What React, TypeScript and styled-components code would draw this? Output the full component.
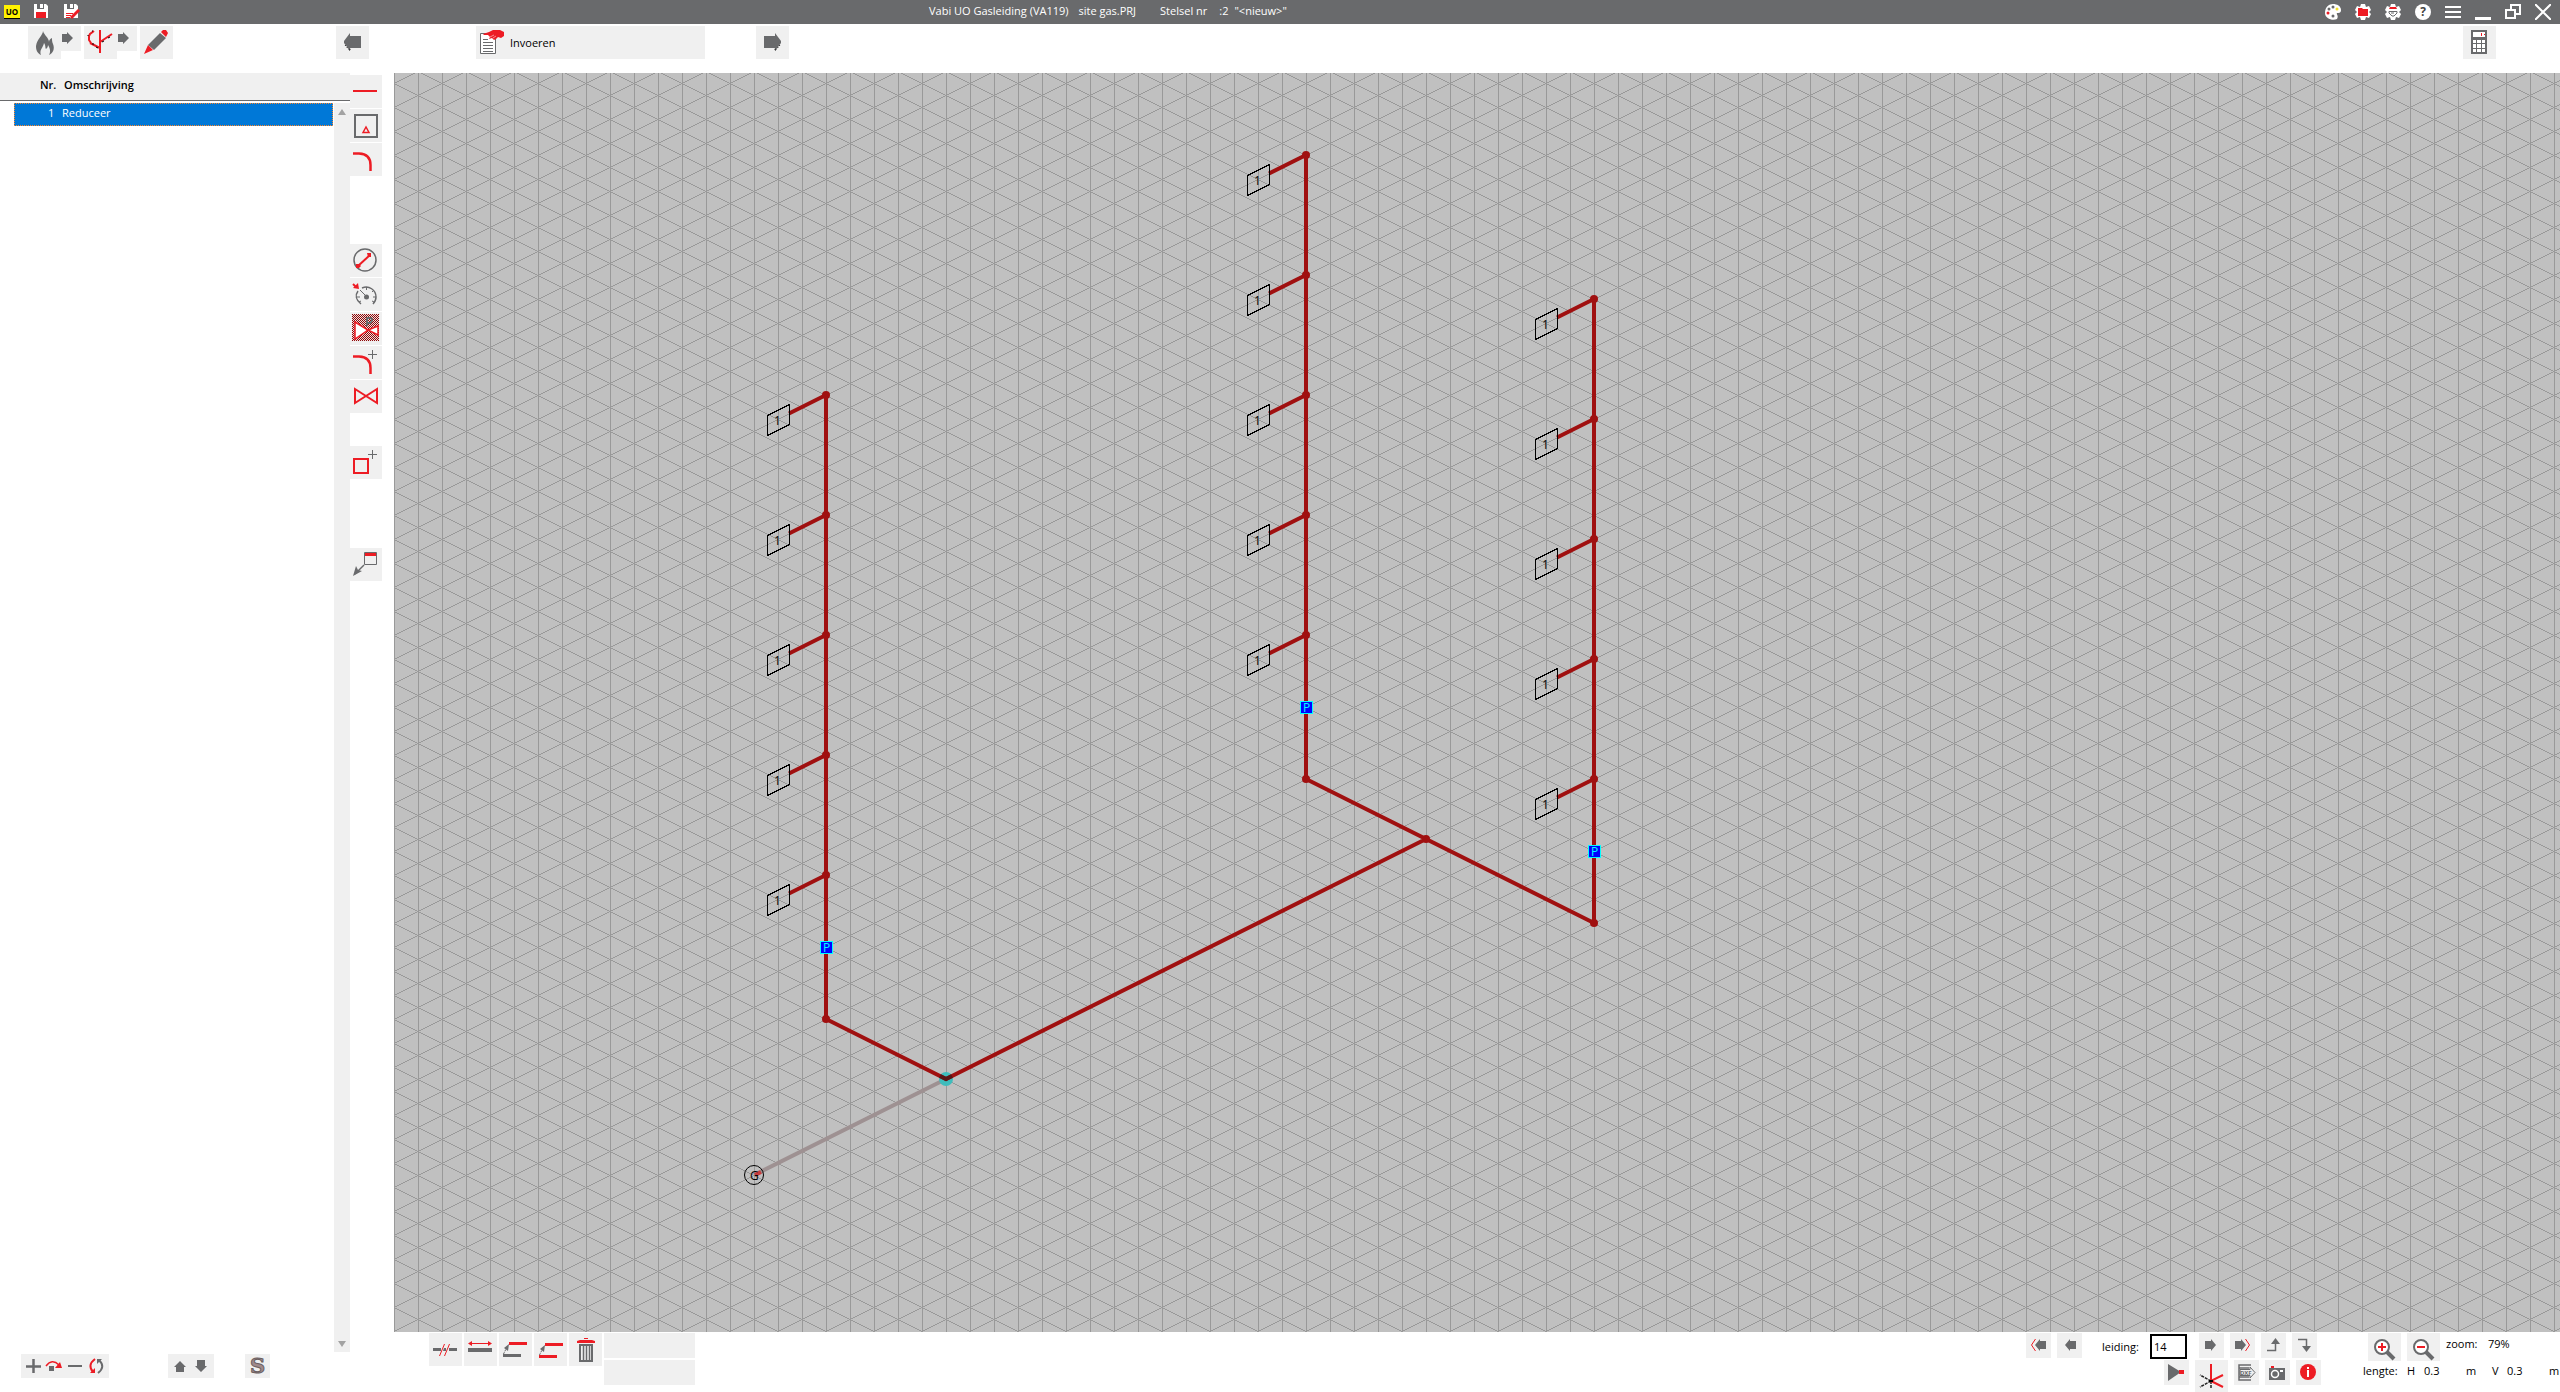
import React from "react";
import styled, { createGlobalStyle } from "styled-components";

const RED = "#ed1c24";
const GREY = "#696a6c";
const FACE = "#f0f0f0";
const PIPE = "#a01010";

const GlobalStyle = createGlobalStyle`
  *, *::before, *::after { box-sizing: border-box; }
  body { margin: 0; background: #fff; overflow: hidden; }
  body, button, input, table { font: 11px/16px "Open Sans", "Noto Sans", sans-serif; color: #000; }
  svg { display: block; }
`;

/* ---------- layout ---------- */

const Window = styled.div`
  display: flex;
  flex-direction: column;
  height: 100vh;
`;

const TitleBar = styled.header`
  display: grid;
  grid-template-columns: calc(50% - 351px) 1fr auto;
  align-items: center;
  height: 24px;
  background: ${GREY};
`;

const TitleGroup = styled.div<{ $gap: number }>`
  display: flex;
  align-items: center;
  gap: ${(p) => p.$gap}px;
  padding: 0 9px 0 4px;
`;

const Title = styled.h1`
  display: flex;
  margin: 0;
  font-size: 11px;
  line-height: 22px;
  font-weight: 400;
  height: 24px;
  color: #fff;
  white-space: pre;
`;

const TitlePart = styled.span<{ $after: number }>`
  margin-right: ${(p) => p.$after}px;
`;

const FlatButton = styled.button<{ $w?: number; $h?: number }>`
  display: block;
  flex: none;
  width: ${(p) => p.$w ?? 33}px;
  height: ${(p) => p.$h ?? 33}px;
  padding: 0;
  border: 0;
  background: ${FACE};
  overflow: hidden;
`;

const TitleButton = styled(FlatButton)`
  width: 16px;
  height: 16px;
  background: none;
  overflow: visible;
`;

const Toolbar = styled.nav`
  display: flex;
  align-items: flex-start;
  height: 49px;
  padding: 2px 64px 0 28px;
`;

const Steps = styled.div`
  display: flex;
  align-items: flex-start;
  gap: 3px;
  margin-right: 163px;
`;

const Step = styled.div`
  display: flex;
  align-items: flex-start;
`;

const ModeButton = styled.button`
  display: flex;
  align-items: center;
  gap: 1px;
  width: 229px;
  height: 33px;
  margin: 0 51px 0 107px;
  padding: 0;
  border: 0;
  background: ${FACE};
`;

const Push = styled.div`
  margin-left: auto;
`;

const Body = styled.div`
  display: flex;
  flex: 1;
  min-height: 0;
`;

const SidePanel = styled.aside`
  display: flex;
  flex-direction: column;
  width: 350px;
  padding-bottom: 14px;
`;

const ListArea = styled.div`
  display: grid;
  grid-template-columns: 1fr 16px;
  flex: 1;
`;

const PartTable = styled.table`
  grid-column: 1 / 3;
  grid-row: 1;
  display: block;
`;

const PartHead = styled.thead`
  display: block;
  height: 28px;
  background: ${FACE};
  border-bottom: 1px solid ${GREY};
`;

const PartBody = styled.tbody`
  display: block;
  padding: 2px 17px 0 14px;
`;

const HeadRow = styled.tr`
  display: flex;
  padding: 4px 0 0 40px;
`;

const HeadCell = styled.th<{ $w: number }>`
  width: ${(p) => p.$w}px;
  padding: 0;
  font-weight: 600;
  text-align: left;
`;

const PartRow = styled.tr`
  display: flex;
  height: 23px;
  padding: 1px 0 0 33px;
  background: #0078d7;
  border: 1px dotted #ff8728;
`;

const PartCell = styled.td<{ $w: number }>`
  width: ${(p) => p.$w}px;
  padding: 0;
  color: #fff;
`;

const ScrollTrack = styled.div`
  grid-column: 2;
  grid-row: 1;
  display: flex;
  flex-direction: column;
  justify-content: space-between;
  align-items: center;
  margin-top: 30px;
  padding: 6px 0 5px;
  background: ${FACE};
`;

const ListTools = styled.div`
  display: flex;
  padding: 2px 0 0 21px;
`;

const ListToolGroup = styled.div<{ $after: number }>`
  display: flex;
  margin-right: ${(p) => p.$after}px;
`;

const Rail = styled.nav`
  display: flex;
  flex-direction: column;
  width: 44px;
  padding-top: 2px;
`;

const RailGroup = styled.div<{ $after: number }>`
  display: flex;
  flex-direction: column;
  gap: 1px;
  margin-bottom: ${(p) => p.$after}px;
`;

const Work = styled.main`
  display: flex;
  flex-direction: column;
  flex: 1;
  min-width: 0;
`;

const Canvas = styled.svg`
  flex: 1;
  width: 100%;
  min-height: 0;
  background: #c0c0c0;
`;

const Footer = styled.footer`
  display: flex;
  align-items: flex-start;
  height: 60px;
  padding: 1px 0 0 35px;
`;

const FooterTools = styled.div`
  display: flex;
  gap: 2px;
  margin-right: auto;
`;

const InfoFields = styled.div`
  display: grid;
  gap: 2px;
`;

const InfoField = styled.div`
  width: 91px;
  height: 25px;
  background: ${FACE};
`;

const Block = styled.div<{ $after?: number }>`
  display: flex;
  flex-direction: column;
  gap: 2px;
  margin-right: ${(p) => p.$after ?? 0}px;
`;

const BlockRow = styled.div<{ $indent?: number; $gap?: number }>`
  display: flex;
  align-items: flex-start;
  gap: ${(p) => p.$gap ?? 6}px;
  height: 25px;
  padding-left: ${(p) => p.$indent ?? 0}px;
`;

const PipeLabel = styled.label`
  width: 56px;
  padding: 6px 0 0 14px;
  white-space: nowrap;
`;

const PipeInput = styled.input`
  width: 37px;
  height: 25px;
  margin: 1px 6px 0 0;
  padding: 0 0 0 2px;
  border: 2px solid #000;
  border-radius: 0;
  background: #fff;
  outline: 0;
`;

const Caption = styled.span<{ $w: number }>`
  flex: none;
  width: ${(p) => p.$w}px;
  padding-top: 3px;
  white-space: nowrap;
`;

const CanvasText = styled.text`
  font: 12px "Open Sans", "Noto Sans", sans-serif;
`;

/* ---------- icons ---------- */

const Icon = ({ w = 33, h = w, children }: { w?: number; h?: number; children: React.ReactNode }) => (
  <svg width={w} height={h} viewBox={`0 0 ${w} ${h}`} fill="none" aria-hidden="true">{children}</svg>
);

const FlameIcon = () => (
  <Icon>
    <path fill={GREY} d="M15 5C15 9 9 13 8 20C8 24 9 27 13 29C11 24 15 22 16 17C18 20 17 22 18 23C19 22 20 21 20 19C22 22 23 26 21 29C25 27 27 23 25 18C24 16 24 14 24 12C22 13 21 14 21 16C21 12 16 9 15 5Z" />
  </Icon>
);
const StepArrow = () => (
  <Icon w={20} h={25}><path fill={GREY} d="M1 8H6V6L12 12L6 18V16H1Z" /></Icon>
);
const TreeIcon = () => (
  <Icon>
    <path stroke={RED} strokeWidth="2" d="M16 4V27M16 16L28 8M16 22L6 17M10 5L6 8L5 10V14L7 17" />
    <path stroke="#000" d="M18 16L20 15M24 12L26 11M8 18L10 18M12 21L14 22M4 9V10M8 5H9" />
  </Icon>
);
const PencilIcon = () => (
  <Icon>
    <path fill={GREY} d="M8 19L20 7L26 12L14 24Z" />
    <path fill={RED} d="M21 6L23 4H26L28 7L26 11ZM8 19L13 24L4 28Z" />
  </Icon>
);
const BigArrow = ({ flip = false }: { flip?: boolean }) => (
  <Icon>
    <g transform={flip ? "translate(33 0) scale(-1 1)" : undefined}>
      <path fill={GREY} d="M8 15L14 7V10H25V22H14V25L8 17Z" />
      <path stroke="#000" strokeDasharray="1 2" d="M9 19L14 25V22" />
    </g>
  </Icon>
);
const EnterIcon = () => (
  <Icon>
    <path fill="#fff" stroke={GREY} d="M4.500 7.500H19.500V27.500H4.500Z" />
    <path stroke={GREY} d="M7 13.500H12M7 16.500H17M7 19.500H17M7 22.500H17M7 25.500H17" />
    <path fill={RED} d="M7 8L13 6L17 4H24L28 6V10L25 12L22 11L20 13L18 14L16 12L13 13L14 11L12 9H8Z" />
    <path stroke="#fff" strokeWidth="0.500" d="M14 11L18 9M17 12L20 10" />
  </Icon>
);
const CalculatorIcon = () => (
  <Icon>
    <path fill={GREY} d="M8 4H24V28H8Z" />
    <path fill="#fff" d="M10 6H22V11H10ZM10 14H13V17H10ZM14 14H18V17H14ZM19 14H22V17H19ZM10 18H13V22H10ZM14 18H18V22H14ZM19 18H22V22H19ZM10 23H13V26H10ZM14 23H18V26H14ZM19 23H22V26H19Z" />
    <path stroke={RED} d="M18.500 7V10M21 8.500H22" />
  </Icon>
);

const LineIcon = () => <Icon><path fill={RED} d="M3 15H27V17H3Z" /></Icon>;
const ApplianceIcon = () => (
  <Icon>
    <path stroke={GREY} strokeWidth="2" d="M5 6H27V28H5Z" />
    <path stroke={RED} strokeWidth="1.500" d="M13 23.500L16 18L19 23.500Z" />
  </Icon>
);
const Plus = () => <path stroke={GREY} d="M22.500 4V13M18 8.500H27" />;
const BendIcon = ({ plus = false }: { plus?: boolean }) => (
  <Icon>
    <path stroke={RED} strokeWidth="2.500" d="M3 10.500H9Q20.500 11 20.500 22V28" />
    {plus && <Plus />}
  </Icon>
);
const DiameterIcon = () => (
  <Icon>
    <circle cx="15" cy="16" r="11" stroke={GREY} strokeWidth="1.500" />
    <path stroke={RED} strokeWidth="2" d="M8 22L20 11" />
    <path fill={RED} d="M17 9H21V13H18ZM6 20H9L11 22L9 24H6Z" />
  </Icon>
);
const GaugeIcon = () => (
  <Icon>
    <path stroke={GREY} strokeWidth="1.500" d="M11 26C6 22 5 17 8 13M12 10C19 7 26 12 26 19C26 22 25 24 23 26" />
    <path stroke={GREY} d="M16.500 9V12M22 14L24 12M23 19H26M7 19H10M9 24L11 23M22 23L24 24M10 12L16 18" />
    <circle cx="16.500" cy="19" r="2.500" fill={GREY} />
    <path stroke={RED} strokeWidth="2" d="M3 6L6 9" />
    <path fill={RED} d="M8 5L9 11L3 10Z" />
  </Icon>
);
const RegulatorIcon = () => (
  <Icon>
    <defs>
      <pattern id="mesh" width="2" height="2" patternUnits="userSpaceOnUse">
        <path fill="#f0dede" d="M0 0H2V2H0Z" />
        <path fill="#8c0808" d="M0 0H1V1H0ZM1 1H2V2H1Z" />
      </pattern>
    </defs>
    <path fill="url(#mesh)" shapeRendering="crispEdges" d="M2 2H29V29H2Z" />
    <path stroke={GREY} strokeWidth="2" d="M17 14V6H20Q22 6 22 8T20 11H17" />
    <path fill="#fff" stroke={RED} strokeWidth="1.500" d="M5 10L18 18L5 27Z" />
    <path fill="#fff" stroke={RED} strokeWidth="1.500" d="M28 14L18 18L28 23Z" />
  </Icon>
);
const ValveIcon = () => (
  <Icon><path stroke={RED} strokeWidth="2" d="M5 9L27 23V9L5 23Z" /></Icon>
);
const SquarePlusIcon = () => (
  <Icon><path stroke={RED} strokeWidth="2" d="M4 13H18V27H4Z" /><Plus /></Icon>
);
const CalloutIcon = () => (
  <Icon>
    <path stroke={GREY} d="M14.500 4.500H26.500V16.500H14.500Z" />
    <path fill={RED} d="M15 5H26V8H15Z" />
    <path stroke={GREY} strokeWidth="1.500" d="M14 17L5 26" />
    <path fill={GREY} d="M3 28L6 18L8 22L12 23Z" />
  </Icon>
);

const CutIcon = () => (
  <Icon>
    <path fill={GREY} d="M4 15H12V18H4ZM20 15H28V18H20ZM15 15H17V18H14Z" />
    <path stroke={RED} d="M10.500 23L15.500 11M15.500 23L20.500 11" />
  </Icon>
);
const StretchIcon = () => (
  <Icon>
    <path fill={GREY} d="M4 15H28V19H4Z" />
    <path stroke={RED} d="M5 10.500H27" />
    <path fill={RED} d="M4 10.500L8 8V13ZM28 10.500L24 8V13Z" />
  </Icon>
);
const MoveIcon = ({ both = false }: { both?: boolean }) => (
  <Icon>
    <g transform={both ? "translate(1 1)" : undefined}>
      <path fill={RED} d="M10 9H28V12H10Z" />
      <path fill={both ? RED : GREY} d="M4 21H22V24H4Z" />
      <path stroke={GREY} d="M4.500 21L8.500 13" strokeDasharray="2 1" />
      <path fill={GREY} d="M10 11L5 15L9 18Z" />
    </g>
  </Icon>
);
const TrashIcon = () => (
  <Icon>
    <path stroke={GREY} strokeWidth="2" d="M11 12H23V28H11Z" />
    <path stroke={GREY} strokeWidth="1.500" d="M14.500 13V27M17.500 13V27M20.500 13V27" />
    <path fill={RED} d="M8 8L11 7H23L26 8V10H8ZM15 5H19V6H15Z" />
  </Icon>
);

const SmallArrow = ({ back = false, far = false }: { back?: boolean; far?: boolean }) => (
  <Icon w={25}>
    <g transform={back ? "translate(25 0) scale(-1 1)" : undefined}>
      <path fill={GREY} d={far ? "M5 8H11V6L16 12L11 18V16H5Z" : "M6 8H12V6L17 12L12 18V16H6Z"} />
      {far && <path stroke={RED} d="M15.500 6L19.500 12L15.500 18" />}
    </g>
  </Icon>
);
const TurnIcon = ({ down = false }: { down?: boolean }) => (
  <Icon w={25}>
    {down ? (
      <><path stroke={GREY} d="M6 6.500H14.500V15" strokeWidth="1.500" /><path fill={GREY} d="M10 13H19L14.500 19Z" /></>
    ) : (
      <><path stroke={GREY} d="M6 17.500H14.500V10" strokeWidth="1.500" /><path fill={GREY} d="M10 11H19L14.500 5Z" /></>
    )}
  </Icon>
);
const PlayIcon = () => (
  <Icon w={25}><path fill={GREY} d="M4 4L17 12L4 21Z" /><path fill={RED} d="M15 10H20V14H15Z" /></Icon>
);
const AxesIcon = () => (
  <Icon>
    <path stroke="#222" strokeWidth="1.500" strokeDasharray="3 1" d="M16 21L5 15M16 21L5 27M16 21V29" />
    <path stroke={RED} strokeWidth="2" d="M16 4V21L28 15M16 21L28 27" />
    <path stroke="#000" strokeWidth="2" d="M14 21H18" />
  </Icon>
);
const DxfText = styled.text`
  font: 700 6px "Noto Sans", sans-serif;
`;
const DxfIcon = () => (
  <Icon w={25}>
    <path stroke={GREY} strokeWidth="1.500" d="M17 5H5V20H17M5 8H15M5 17H15" />
    <path fill={FACE} stroke={GREY} d="M6 9.500H16V7L21 12.500L16 18V15.500H6Z" />
    <DxfText x="6" y="15" fill={GREY}>DXF</DxfText>
  </Icon>
);
const CameraIcon = () => (
  <Icon w={25}>
    <path fill={GREY} d="M4 8H20V20H4Z" />
    <path fill={RED} d="M6 6H9V8H6Z" />
    <circle cx="10" cy="14" r="3.500" fill={GREY} stroke="#fff" strokeWidth="1.500" />
    <path fill="#fff" d="M15 10H18V12H15Z" />
  </Icon>
);
const InfoIcon = () => (
  <Icon w={25}>
    <circle cx="12" cy="12" r="8" fill={RED} />
    <path fill="#fff" d="M11 7H13V9H11ZM11 10H13V17H11Z" />
  </Icon>
);
const ZoomIcon = ({ plus = false }: { plus?: boolean }) => (
  <Icon w={33} h={28}>
    <circle cx="14" cy="14" r="7" fill="#fff" stroke={GREY} strokeWidth="2" />
    <path stroke={GREY} strokeWidth="4" d="M19 19L26 26" />
    <path stroke={RED} strokeWidth="2" d={plus ? "M10 14H18M14 10V18" : "M10 14H18"} />
  </Icon>
);

const AddIcon = () => <Icon w={22} h={24}><path stroke={GREY} strokeWidth="2.500" d="M5 12.500H20M12.500 5V19" /></Icon>;
const JumpIcon = () => (
  <Icon w={22} h={24}>
    <path fill={GREY} d="M6 12H11V17H6Z" />
    <path stroke={RED} strokeWidth="1.500" d="M3 12Q9 4 16 11" />
    <path fill={RED} d="M17 8L19 14H12Z" />
  </Icon>
);
const RemoveIcon = () => <Icon w={22} h={24}><path fill={GREY} d="M3 11H17V13H3Z" /></Icon>;
const SwapIcon = () => (
  <Icon w={22} h={24}>
    <path stroke={RED} strokeWidth="2" d="M8 5Q0 11 6 18" />
    <path fill={RED} d="M3 19H8V14Z" />
    <path stroke={GREY} strokeWidth="2" d="M11 19Q19 13 12 6" />
    <path fill={GREY} d="M10 5H15L10 10Z" />
  </Icon>
);
const UpIcon = () => <Icon w={23} h={24}><path fill={GREY} d="M12 7L18 13H16V18H8V13H6Z" /></Icon>;
const DownIcon = () => <Icon w={23} h={24}><path fill={GREY} d="M10 18L16 12H14V6H6V12H4Z" /></Icon>;
const StandardMark = styled.span`
  display: block;
  font: 700 21px/24px "DejaVu Serif", serif;
  color: #a08a8a;
  -webkit-text-stroke: 1px #6a5f60;
  text-align: center;
`;

const AppBadge = styled.span`
  width: 16px;
  height: 14px;
  background: #fff200;
  border-bottom: 1px solid #000;
  font: 700 8px/13px "Open Sans", sans-serif;
  text-align: center;
`;
const SaveIcon = ({ edit = false }: { edit?: boolean }) => (
  <Icon w={16}>
    <path fill="#fff" d="M0 0H3V5H10V0H12L14 2V14H0Z" />
    <path fill="#fff" d="M6 0H9V4H6Z" />
    {edit ? (
      <><path stroke={RED} d="M2 9.500H9M2 11.500H7M2 13.500H6" /><path stroke={RED} strokeWidth="3" d="M7 14L15 6" /></>
    ) : (
      <path fill={RED} d="M2 8H12V14H2Z" />
    )}
  </Icon>
);
const PaletteIcon = () => (
  <Icon w={16}>
    <path fill="#fff" d="M8 0C12 0 16 2 16 6C16 9 14 9 12 9C11 10 14 12 12 15C8 17 0 15 0 9C0 3 4 0 8 0Z" />
    <circle cx="4" cy="5" r="1.500" fill={GREY} /><circle cx="8" cy="3" r="1.500" fill={GREY} />
    <circle cx="12" cy="5" r="1.500" fill="#f5e02a" /><circle cx="3" cy="9" r="1.500" fill={RED} /><circle cx="8" cy="12" r="1.500" fill={GREY} />
  </Icon>
);
const GEAR = "M6 0H10L11 3L14 2L16 6L14 8L16 10L14 14L11 13L10 16H6L5 13L2 14L0 10L2 8L0 6L2 2L5 3Z";
const FolderGearIcon = () => (
  <Icon w={16}><path fill="#fff" d={GEAR} /><path fill={RED} d="M3 4H7L8 5H13V12H3Z" /></Icon>
);
const ToolGearIcon = () => (
  <Icon w={16}>
    <path fill="#fff" d={GEAR} />
    <path fill={RED} d="M5 3H11L12 5H4Z" /><path stroke={GREY} d="M4 7.500H12V9L9 12H7L4 9ZM6 9H9" />
  </Icon>
);
const HelpMark = styled.span`
  display: block;
  width: 16px;
  height: 16px;
  border-radius: 8px;
  background: #fff;
  color: #444;
  font: 700 12px/16px "Open Sans", sans-serif;
  text-align: center;
`;
const MenuIcon = () => <Icon w={16}><path fill="#fff" d="M0 2H16V4H0ZM0 7H16V9H0ZM0 12H16V14H0Z" /></Icon>;
const MinimizeIcon = () => <Icon w={16}><path fill="#fff" d="M0 13H16V16H0Z" /></Icon>;
const RestoreIcon = () => (
  <Icon w={16}><path stroke="#fff" strokeWidth="2" d="M6 5V1H15V10H11M1 6H10V14H1Z" /></Icon>
);
const CloseIcon = () => <Icon w={16}><path stroke="#fff" strokeWidth="2" d="M0 0L16 16M16 0L0 16" /></Icon>;

/* ---------- drawing ---------- */

type Riser = { x: number; taps: number[]; regulator: number; base: number };

const STEP = 120;
const taps = (top: number) => [0, 1, 2, 3, 4].map((i) => top + i * STEP);
const RISERS: Riser[] = [
  { x: 432, taps: taps(322), regulator: 874, base: 946 },
  { x: 912, taps: taps(82), regulator: 634, base: 706 },
  { x: 1200, taps: taps(226), regulator: 778, base: 850 },
];

const Tap = ({ x, y }: { x: number; y: number }) => (
  <g>
    <path stroke={PIPE} strokeWidth="4" d={`M${x} ${y}L${x - 37} ${y + 18.5}`} />
    <circle cx={x} cy={y} r="4" fill={PIPE} />
    <path stroke="#000" fill="none" shapeRendering="crispEdges" d={`M${x - 58.5} ${y + 20.5}l22 -11v20l-22 11z`} />
    <CanvasText x={x - 52} y={y + 30}>1</CanvasText>
  </g>
);

const RiserDrawing = ({ riser }: { riser: Riser }) => (
  <g>
    <path stroke={PIPE} strokeWidth="4" d={`M${riser.x} ${riser.taps[0]}V${riser.base}`} />
    {riser.taps.map((y) => <Tap key={y} x={riser.x} y={y} />)}
    <circle cx={riser.x} cy={riser.base} r="4" fill={PIPE} />
    <rect x={riser.x - 5.5} y={riser.regulator - 5.5} width="12" height="12" fill="#00f" stroke="#0ff" />
    <CanvasText x={riser.x - 3} y={riser.regulator + 5} fill="#0ff">P</CanvasText>
  </g>
);

const Drawing = () => (
  <Canvas role="img" aria-label="Gasleiding">
    <defs>
      <pattern id="iso" y="10" width="48" height="24" patternUnits="userSpaceOnUse">
        <path
          fill="#999"
          shapeRendering="crispEdges"
          d="M0 0H1V24H0ZM24 0H25V24H24ZM0 0L48 24V25L0 1ZM0 -24L48 0V1L0 -23ZM0 24L48 0V1L0 25ZM0 0L48 -24V-23L0 1Z"
        />
      </pattern>
    </defs>
    <rect width="100%" height="100%" fill="url(#iso)" />
    <path stroke="#9e9192" strokeWidth="4" d="M360 1102L552 1006" />
    <circle cx="552" cy="1006" r="7" fill="#3fbcbc" />
    <path stroke={PIPE} strokeWidth="4" fill="none" d="M432 946L552 1006L1032 766M912 706L1200 850" />
    <path stroke="#5a1414" strokeWidth="4" fill="none" d="M546 1003L552 1006L558 1003" />
    <circle cx="1032" cy="766" r="4" fill={PIPE} />
    {RISERS.map((r) => <RiserDrawing key={r.x} riser={r} />)}
    <circle cx="360" cy="1102" r="9.500" fill="none" stroke="#000" />
    <path stroke="#c83c3c" strokeWidth="4" d="M361 1102L367 1099" />
    <CanvasText x="356" y="1107">G</CanvasText>
  </Canvas>
);

/* ---------- page ---------- */

type Tool = { name: string; icon: React.ReactNode };

const RAIL: { after: number; tools: Tool[] }[] = [
  { after: 68, tools: [
    { name: "Leiding", icon: <LineIcon /> },
    { name: "Toestel", icon: <ApplianceIcon /> },
    { name: "Bocht", icon: <BendIcon /> },
  ] },
  { after: 33, tools: [
    { name: "Diameter", icon: <DiameterIcon /> },
    { name: "Meter", icon: <GaugeIcon /> },
    { name: "Drukregelaar", icon: <RegulatorIcon /> },
    { name: "Bocht toevoegen", icon: <BendIcon plus /> },
    { name: "Afsluiter", icon: <ValveIcon /> },
  ] },
  { after: 69, tools: [{ name: "Toestel toevoegen", icon: <SquarePlusIcon /> }] },
  { after: 0, tools: [{ name: "Label", icon: <CalloutIcon /> }] },
];

const EDIT_TOOLS: Tool[] = [
  { name: "Knippen", icon: <CutIcon /> },
  { name: "Verlengen", icon: <StretchIcon /> },
  { name: "Verplaatsen", icon: <MoveIcon /> },
  { name: "Kopiëren", icon: <MoveIcon both /> },
  { name: "Verwijderen", icon: <TrashIcon /> },
];

const WINDOW_TOOLS: Tool[] = [
  { name: "Kleuren", icon: <PaletteIcon /> },
  { name: "Mappen", icon: <FolderGearIcon /> },
  { name: "Instellingen", icon: <ToolGearIcon /> },
  { name: "Help", icon: <HelpMark>?</HelpMark> },
  { name: "Menu", icon: <MenuIcon /> },
  { name: "Minimaliseren", icon: <MinimizeIcon /> },
  { name: "Herstellen", icon: <RestoreIcon /> },
  { name: "Sluiten", icon: <CloseIcon /> },
];

const Small = ({ name, children, w = 25, h = 25 }: { name: string; children: React.ReactNode; w?: number; h?: number }) => (
  <FlatButton $w={w} $h={h} aria-label={name}>{children}</FlatButton>
);

export default function App() {
  return (
    <Window>
      <GlobalStyle />
      <TitleBar>
        <TitleGroup $gap={14}>
          <AppBadge>UO</AppBadge>
          <TitleButton aria-label="Opslaan"><SaveIcon /></TitleButton>
          <TitleButton aria-label="Opslaan als"><SaveIcon edit /></TitleButton>
        </TitleGroup>
        <Title>
          <TitlePart $after={10}>Vabi UO Gasleiding (VA119)</TitlePart>
          <TitlePart $after={24}>site gas.PRJ</TitlePart>
          <TitlePart $after={12}>Stelsel nr</TitlePart>
          <TitlePart $after={6}>:2</TitlePart>
          <TitlePart $after={0}>"&lt;nieuw&gt;"</TitlePart>
        </Title>
        <TitleGroup $gap={14}>
          {WINDOW_TOOLS.map((t) => <TitleButton key={t.name} aria-label={t.name}>{t.icon}</TitleButton>)}
        </TitleGroup>
      </TitleBar>

      <Toolbar>
        <Steps>
          <Step>
            <FlatButton aria-label="Gas"><FlameIcon /></FlatButton>
            <Small name="Volgende" w={20}><StepArrow /></Small>
          </Step>
          <Step>
            <FlatButton aria-label="Stelsel"><TreeIcon /></FlatButton>
            <Small name="Volgende" w={20}><StepArrow /></Small>
          </Step>
          <FlatButton aria-label="Tekenen"><PencilIcon /></FlatButton>
        </Steps>
        <FlatButton aria-label="Vorige"><BigArrow /></FlatButton>
        <ModeButton><EnterIcon />Invoeren</ModeButton>
        <FlatButton aria-label="Volgende"><BigArrow flip /></FlatButton>
        <Push><FlatButton aria-label="Berekenen"><CalculatorIcon /></FlatButton></Push>
      </Toolbar>

      <Body>
        <SidePanel>
          <ListArea>
            <PartTable>
              <PartHead>
                <HeadRow><HeadCell $w={24}>Nr.</HeadCell><HeadCell $w={200}>Omschrijving</HeadCell></HeadRow>
              </PartHead>
              <PartBody>
                <PartRow><PartCell $w={14}>1</PartCell><PartCell $w={200}>Reduceer</PartCell></PartRow>
              </PartBody>
            </PartTable>
            <ScrollTrack>
              <Icon w={8} h={6}><path fill="#a3a3a3" d="M4 0L8 6H0Z" /></Icon>
              <Icon w={8} h={6}><path fill="#a3a3a3" d="M4 6L8 0H0Z" /></Icon>
            </ScrollTrack>
          </ListArea>
          <ListTools>
            <ListToolGroup $after={59}>
              <Small name="Toevoegen" w={22} h={24}><AddIcon /></Small>
              <Small name="Invoegen" w={22} h={24}><JumpIcon /></Small>
              <Small name="Verwijderen" w={22} h={24}><RemoveIcon /></Small>
              <Small name="Wisselen" w={22} h={24}><SwapIcon /></Small>
            </ListToolGroup>
            <ListToolGroup $after={31}>
              <Small name="Omhoog" w={23} h={24}><UpIcon /></Small>
              <Small name="Omlaag" w={23} h={24}><DownIcon /></Small>
            </ListToolGroup>
            <Small name="Standaard" w={25} h={24}><StandardMark>S</StandardMark></Small>
          </ListTools>
        </SidePanel>

        <Rail>
          {RAIL.map((g) => (
            <RailGroup key={g.tools[0].name} $after={g.after}>
              {g.tools.map((t) => <FlatButton key={t.name} $w={32} aria-label={t.name}>{t.icon}</FlatButton>)}
            </RailGroup>
          ))}
        </Rail>

        <Work>
          <Drawing />
          <Footer>
            <FooterTools>
              {EDIT_TOOLS.map((t) => <FlatButton key={t.name} aria-label={t.name}>{t.icon}</FlatButton>)}
              <InfoFields><InfoField /><InfoField /></InfoFields>
            </FooterTools>
            <Block $after={42}>
              <BlockRow>
                <Small name="Eerste leiding"><SmallArrow back far /></Small>
                <Small name="Vorige leiding"><SmallArrow back /></Small>
                <PipeLabel htmlFor="pipe">leiding:</PipeLabel>
                <PipeInput id="pipe" defaultValue="14" />
                <Small name="Volgende leiding"><SmallArrow /></Small>
                <Small name="Laatste leiding"><SmallArrow far /></Small>
                <Small name="Omhoog"><TurnIcon /></Small>
                <Small name="Omlaag"><TurnIcon down /></Small>
              </BlockRow>
              <BlockRow $indent={138}>
                <Small name="Start"><PlayIcon /></Small>
                <FlatButton aria-label="Assen"><AxesIcon /></FlatButton>
                <Small name="DXF"><DxfIcon /></Small>
                <Small name="Foto"><CameraIcon /></Small>
                <Small name="Informatie"><InfoIcon /></Small>
              </BlockRow>
            </Block>
            <Block>
              <BlockRow $indent={5}>
                <FlatButton $h={28} aria-label="Inzoomen"><ZoomIcon plus /></FlatButton>
                <FlatButton $h={28} aria-label="Uitzoomen"><ZoomIcon /></FlatButton>
                <Caption $w={36}>zoom:</Caption>
                <Caption $w={30}>79%</Caption>
              </BlockRow>
              <BlockRow $gap={0}>
                <Caption $w={44}>lengte:</Caption>
                <Caption $w={17}>H</Caption>
                <Caption $w={42}>0.3</Caption>
                <Caption $w={26}>m</Caption>
                <Caption $w={15}>V</Caption>
                <Caption $w={42}>0.3</Caption>
                <Caption $w={11}>m</Caption>
              </BlockRow>
            </Block>
          </Footer>
        </Work>
      </Body>
    </Window>
  );
}
